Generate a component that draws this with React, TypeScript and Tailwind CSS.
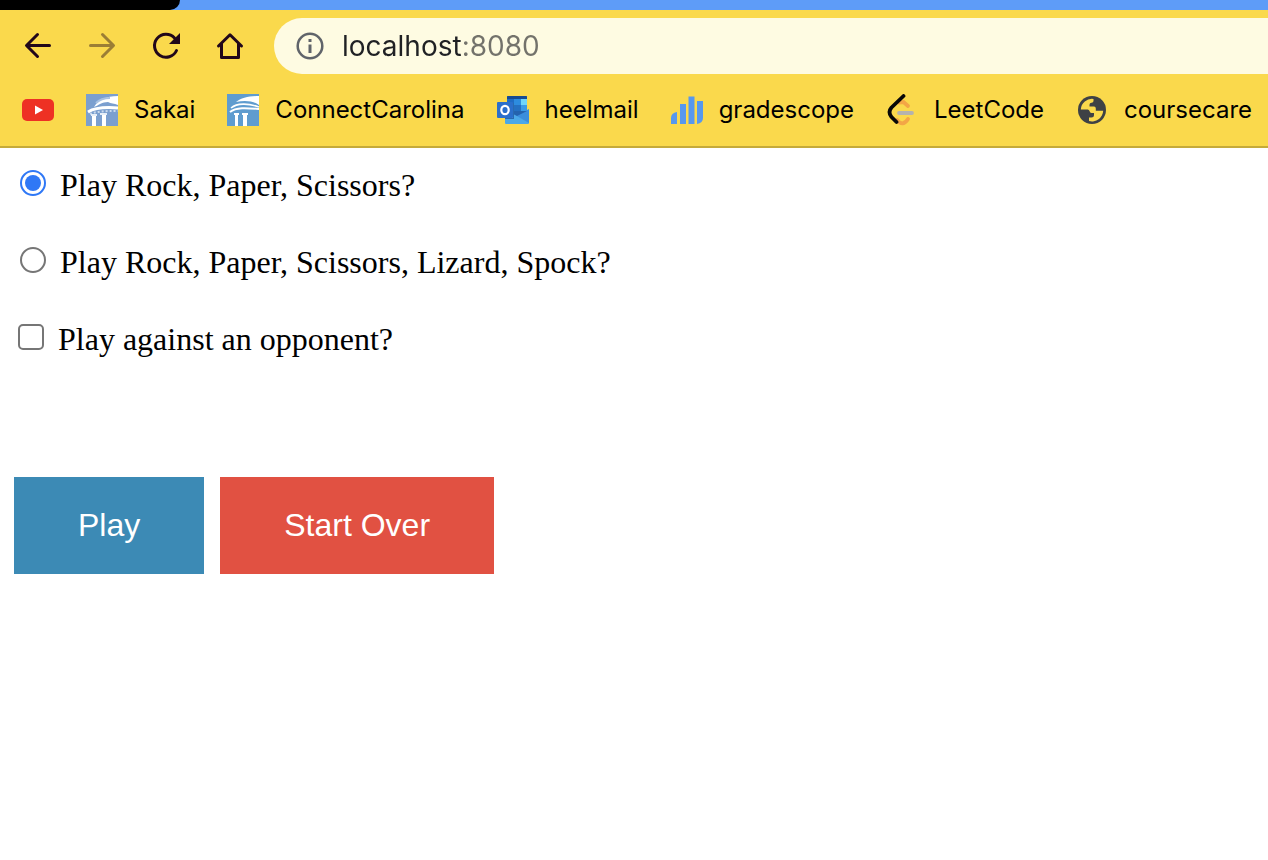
import React, { useState } from "react";

function Sakai() {
  return (
    <svg viewBox="0 0 32 32" className="size-8 shrink-0" aria-hidden="true">
      <rect width="32" height="32" fill="#7b9fcf" />
      <path d="M8 13C12 6 20 2 32 2v9c-4-2-7-1-10-3C16 8 13 11 8 13Z" fill="#fff" />
      <path d="M10 9c4-4 9-5 14-5" stroke="#a9c2e2" strokeWidth="2" fill="none" />
      <path d="M2 18c8-5 18-5 30-4" stroke="#fff" strokeWidth="3" fill="none" />
      <path d="M4 20c8-3 16-3 28-3" stroke="#c9d9ed" strokeWidth="2" strokeDasharray="2 2" fill="none" />
      <path d="M6 22h4v10H6zM16 20h4v12h-4z" fill="#fff" />
      <path d="M5 20h6v2H5zM14 19h7v2h-7z" fill="#e6eef8" />
    </svg>
  );
}

function Carolina() {
  return (
    <svg viewBox="0 0 32 32" className="size-8 shrink-0" aria-hidden="true">
      <rect width="32" height="32" fill="#5f9ccf" />
      <path d="M9 8C14 4 22 2 32 2v9c-5-4-14-5-23-3Z" fill="#fff" />
      <path d="M4 14c6-5 17-5 28-1" stroke="#fff" strokeWidth="1.6" fill="none" />
      <path d="M3 18c6-5 17-4 29-3" stroke="#fff" strokeWidth="2" fill="none" />
      <path d="M7 19h5v2h-1v11H8V21H7zM15 19h6v2h-1v11h-4V21h-1z" fill="#fff" />
    </svg>
  );
}

function YouTube() {
  return (
    <svg viewBox="0 0 32 32" className="size-8 shrink-0" aria-hidden="true">
      <rect y="5" width="32" height="22" rx="5" fill="#ee3124" />
      <path d="M13 11.500v9l8-4.500Z" fill="#fff" />
    </svg>
  );
}

function Outlook() {
  return (
    <svg viewBox="0 0 32 32" className="size-8 shrink-0" aria-hidden="true">
      <path d="M10 3a1 1 0 0 1 1-1h18a1 1 0 0 1 1 1v17H10Z" fill="#1f6cc4" />
      <path d="M10 3a1 1 0 0 1 1-1h18a1 1 0 0 1 1 1v2H10z" fill="#164b92" />
      <path d="M17 5h7v6h-7z" fill="#2d8cdf" />
      <path d="M24 5h6v6h-6z" fill="#6fd6fa" />
      <path d="M17 11h7v6h-7z" fill="#2470c2" />
      <path d="M24 11h6v7h-6z" fill="#3a9be6" />
      <path d="M8 17h9l4 4 11-5v13a1 1 0 0 1-1 1H9a1 1 0 0 1-1-1Z" fill="#4ba8e8" />
      <path d="M32 15v14L19 21.500Z" fill="#3b8edc" />
      <path d="M16 17h14l-10 5-4-2Z" fill="#2463ae" />
      <path d="M16 9h1v16H8v-1h8Z" fill="#2a6aae" />
      <rect y="8" width="16" height="16" rx="1" fill="#2b6fcb" />
      <ellipse cx="8" cy="16" rx="3.700" ry="4.200" fill="none" stroke="#fff" strokeWidth="2.200" />
    </svg>
  );
}

function Gradescope() {
  return (
    <svg viewBox="0 0 32 32" className="size-8 shrink-0" aria-hidden="true" fill="#5798ee">
      <path d="M0 30v-6q0-5 6-6v12Z" />
      <path d="M9 10h6v20H9zM17.500 2.500h6V30h-6z" />
      <path d="M26 7h6v17q0 5-6 6Z" />
    </svg>
  );
}

function LeetCode() {
  return (
    <svg viewBox="0 0 32 32" className="size-8 shrink-0" aria-hidden="true" fill="none" strokeLinecap="round" strokeWidth="3.800">
      <path d="M13 8.500 17.500 8 22 12M11 26c4 5 8 4 11-1" stroke="#f3a646" />
      <path d="M13 19h13" stroke="#b5b3ae" />
      <path d="M17.500 2 5.500 13.500Q1.500 18 5.500 23l5 5" stroke="#080808" strokeLinejoin="round" />
    </svg>
  );
}

function Globe() {
  return (
    <svg viewBox="0 0 32 32" className="size-8 shrink-0" aria-hidden="true">
      <circle cx="16" cy="16" r="14" fill="#3e4145" />
      <path
        d="M4.800 15.500A11.200 11.200 0 0 1 17.500 4.900V7q0 1.800-2 1.800t-2 2v1.700h4.500q1.800 0 1.800 2v2.300h7.400A11.200 11.200 0 0 1 13 27v-3.500h2.500q2.500 0 2.500-2.300v-2.200h-2.500q-1.500 0-2-2t-2.500-1.500Z"
        fill="#fad94c"
      />
    </svg>
  );
}

const bookmarks = [
  { label: "", title: "YouTube", icon: <YouTube /> },
  { label: "Sakai", title: "Sakai", icon: <Sakai /> },
  { label: "ConnectCarolina", title: "ConnectCarolina", icon: <Carolina /> },
  { label: "heelmail", title: "heelmail", icon: <Outlook /> },
  { label: "gradescope", title: "gradescope", icon: <Gradescope /> },
  { label: "LeetCode", title: "LeetCode", icon: <LeetCode /> },
  { label: "coursecare", title: "coursecare", icon: <Globe /> },
];

function NavIcon({ children }: { children: React.ReactNode }) {
  return (
    <svg viewBox="0 0 32 32" className="size-8" fill="none" stroke="currentColor" strokeWidth="3" strokeLinecap="round" strokeLinejoin="round" aria-hidden="true">
      {children}
    </svg>
  );
}

function BrowserChrome() {
  const [address, setAddress] = useState("localhost:8080");
  return (
    <header className="font-[Inter,sans-serif]">
      <div className="h-[10px] bg-[#5e9cf8]">
        <div className="h-full w-[180px] rounded-br-[12px] bg-black" />
      </div>
      <div className="overflow-hidden border-b-2 border-[#c5aa3a] bg-[#fad94c]">
        <div className="flex h-[72px] items-center pl-[22px]">
          <nav className="flex shrink-0 gap-8 text-[#21071a]" aria-label="Navigation">
            <button type="button" aria-label="Back">
              <NavIcon>
                <path d="M27.500 15.500H5M15.500 4.500 4.500 15.500l11 11" />
              </NavIcon>
            </button>
            <button type="button" aria-label="Forward" className="text-[#9b7e35]">
              <NavIcon>
                <path d="M4.500 15.500H27M16.500 4.500l11 11-11 11" />
              </NavIcon>
            </button>
            <button type="button" aria-label="Reload">
              <NavIcon>
                <path d="M26.500 20.500a11.500 11.500 0 1 1-2-12.500" />
                <path d="M30 3v11H19Z" fill="currentColor" stroke="none" />
              </NavIcon>
            </button>
            <button type="button" aria-label="Home">
              <NavIcon>
                <path d="M4.500 16 16 4.800 27.500 16M7.500 14v13.500h17V14" />
              </NavIcon>
            </button>
          </nav>
          <div className="ml-7 flex h-14 min-w-0 flex-1 items-center rounded-l-full bg-[#fefbe2] pl-[22px]">
            <svg viewBox="0 0 28 28" className="size-7 shrink-0 text-[#60646a]" aria-hidden="true">
              <circle cx="14" cy="14" r="12.300" fill="none" stroke="currentColor" strokeWidth="2.500" />
              <path d="M12.500 7h3v3h-3zM12.500 12.500h3v8.500h-3z" fill="currentColor" />
            </svg>
            <input
              type="text"
              aria-label="Address"
              value={address}
              onChange={(e) => setAddress(e.target.value)}
              className="ml-[18px] min-w-0 flex-1 bg-[linear-gradient(to_right,#202124_121px,#73726b_121px)] bg-clip-text text-[28px] leading-9 text-transparent caret-black outline-none"
            />
          </div>
        </div>
        <nav className="flex h-16 items-center gap-8 pb-2 pl-[22px]" aria-label="Bookmarks">
          {bookmarks.map((b) => (
            <a key={b.title} href="#" aria-label={b.title} className="flex shrink-0 items-center gap-4 text-[24px] leading-8 text-black">
              {b.icon}
              {b.label && <span>{b.label}</span>}
            </a>
          ))}
        </nav>
      </div>
    </header>
  );
}

export default function App() {
  const [game, setGame] = useState("rps");
  const [opponent, setOpponent] = useState(false);
  const radio =
    "mr-[14px] mb-[6px] size-[26px] shrink-0 appearance-none rounded-full border-2 border-[#767676] bg-white bg-clip-content p-[3px] checked:border-[#2f78f6] checked:bg-[#2f78f6]";
  const label = "flex items-center";
  return (
    <div className="min-h-screen bg-white">
      <BrowserChrome />
      <main className="px-[14px] pt-[19px] text-black">
        <form onSubmit={(e) => e.preventDefault()}>
          <div className="flex flex-col items-start gap-10 font-['Liberation_Serif',serif] text-[32px] leading-[37px]">
            <label className={label + " pl-[6px]"}>
              <input type="radio" name="game" className={radio} checked={game === "rps"} onChange={() => setGame("rps")} />
              Play Rock, Paper, Scissors?
            </label>
            <label className={label + " pl-[6px]"}>
              <input type="radio" name="game" className={radio} checked={game === "rpsls"} onChange={() => setGame("rpsls")} />
              Play Rock, Paper, Scissors, Lizard, Spock?
            </label>
            <label className={label + " pl-1"}>
              <input
                type="checkbox"
                className="mr-[14px] mb-[6px] size-[26px] shrink-0 appearance-none rounded-[5px] border-2 border-[#767676] bg-white checked:border-[#2f78f6] checked:bg-[#2f78f6]"
                checked={opponent}
                onChange={(e) => setOpponent(e.target.checked)}
              />
              Play against an opponent?
            </label>
          </div>
          <div className="mt-[119px] flex gap-4 font-['Liberation_Sans',sans-serif] text-[32px] leading-[33px] text-white">
            <button type="submit" className="bg-[#3c8ab5] px-16 py-8">
              Play
            </button>
            <button type="reset" className="bg-[#e15142] px-16 py-8" onClick={() => { setGame("rps"); setOpponent(false); }}>
              Start Over
            </button>
          </div>
        </form>
      </main>
    </div>
  );
}
